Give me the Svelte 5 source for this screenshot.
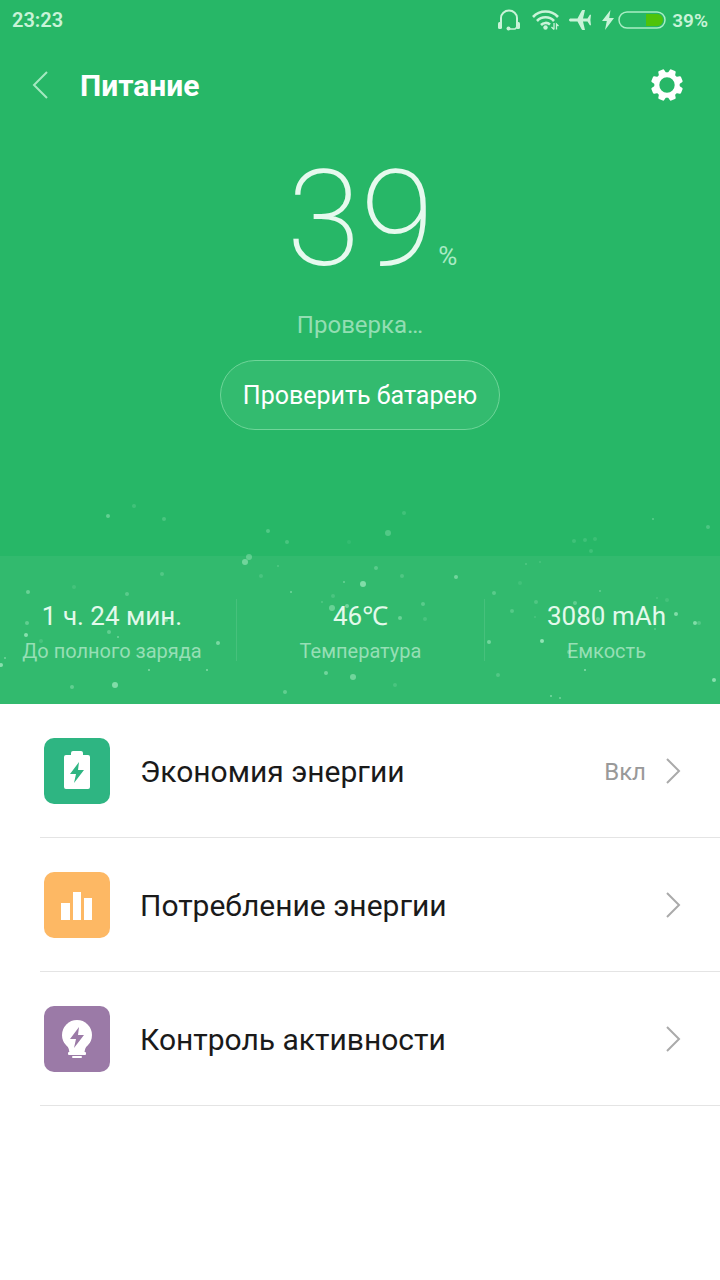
<script lang="ts">
  let level = 39;

  const stats = [
    { value: '1 ч. 24 мин.', label: 'До полного заряда' },
    { value: '46℃', label: 'Температура' },
    { value: '3080 mAh', label: 'Емкость' },
  ];

  const items = [
    { icon: 'saver', title: 'Экономия энергии', state: 'Вкл' },
    { icon: 'usage', title: 'Потребление энергии', state: '' },
    { icon: 'control', title: 'Контроль активности', state: '' },
  ];

  // x, y, radius, opacity (x is out of 720)
  const bubbles = [
    [108, 26, 2, 0.35], [134, 16, 2, 0.15], [164, 29, 2, 0.2], [162, 84, 2, 0.2],
    [74, 97, 2, 0.12], [28, 102, 2, 0.35], [127, 104, 2, 0.25], [27, 133, 2, 0.3],
    [26, 145, 2, 0.55], [109, 142, 2, 0.3], [118, 147, 1, 0.4], [41, 151, 2, 0.15],
    [218, 153, 2, 0.45], [5, 168, 1, 0.4], [1, 175, 2, 0.55], [149, 180, 1, 0.5],
    [207, 180, 1, 0.5], [72, 197, 2, 0.3], [115, 195, 3, 0.5], [166, 130, 2, 0.4],
    [268, 41, 2, 0.25], [287, 52, 2, 0.2], [249, 67, 3, 0.3], [245, 72, 3, 0.4],
    [278, 76, 1, 0.2], [261, 86, 2, 0.15], [349, 52, 2, 0.08], [388, 43, 3, 0.25],
    [404, 23, 2, 0.15], [376, 78, 2, 0.25], [402, 86, 2, 0.18], [456, 87, 2, 0.4],
    [344, 92, 1, 0.35], [363, 94, 3, 0.5], [291, 102, 1, 0.4], [333, 106, 2, 0.15],
    [322, 112, 1, 0.2], [332, 118, 3, 0.35], [347, 116, 2, 0.4], [423, 114, 2, 0.25],
    [400, 128, 2, 0.35], [425, 129, 2, 0.15], [326, 183, 2, 0.4], [353, 187, 3, 0.4],
    [395, 195, 2, 0.15], [285, 202, 2, 0.3], [653, 29, 1, 0.3], [708, 37, 2, 0.22],
    [574, 51, 2, 0.14], [585, 50, 2, 0.14], [595, 49, 2, 0.12], [591, 61, 2, 0.14],
    [526, 74, 1, 0.2], [540, 72, 1, 0.15], [520, 93, 2, 0.1], [494, 103, 2, 0.25],
    [536, 112, 2, 0.18], [512, 121, 2, 0.22], [600, 101, 1, 0.3], [575, 113, 2, 0.3],
    [535, 127, 1, 0.15], [657, 108, 1, 0.15], [667, 110, 2, 0.12], [676, 124, 2, 0.5],
    [598, 129, 2, 0.35], [695, 133, 2, 0.5], [699, 133, 2, 0.2], [655, 139, 1, 0.25],
    [542, 151, 2, 0.6], [489, 152, 2, 0.4], [569, 162, 2, 0.3], [585, 180, 1, 0.55],
    [498, 185, 2, 0.2], [714, 190, 2, 0.55], [551, 206, 1, 0.45], [560, 208, 1, 0.4],
  ];

  const teeth = [0, 1, 2, 3, 4, 5, 6, 7].map(n => n * 45 + 22.5);
</script>

<main>
  <section class="hero">
    <svg class="bubbles" aria-hidden="true">
      {#each bubbles as [x, y, r, o]}
        <circle cx="{x / 7.2}%" cy={y} {r} fill="#d0ffe2" opacity={o} />
      {/each}
    </svg>

    <div class="status">
      <span class="time">23:23</span>
      <div class="status-icons">
        <svg class="headset" width="22" height="22" viewBox="0 0 22 22">
          <path d="M3 17V9a8 7.5 0 0 1 16 0v8" fill="none" stroke="currentColor" stroke-width="2" />
          <rect x="0" y="13" width="4" height="7" rx="1.5" fill="currentColor" />
          <rect x="18" y="13" width="4" height="7" rx="1.5" fill="currentColor" />
          <path d="M19 18l-2 2h-6" fill="none" stroke="currentColor" stroke-width="1.5" />
          <circle cx="10.5" cy="19.5" r="2" fill="currentColor" />
        </svg>
        <svg class="wifi" width="28" height="22" viewBox="0 0 28 22">
          <g fill="none" stroke="currentColor" stroke-width="2.6">
            <path d="M1 8a17 17 0 0 1 25 0" />
            <path d="M5 12a11.5 11.5 0 0 1 17 0" />
            <path d="M9 16a6.5 6.5 0 0 1 9 -.5" />
          </g>
          <circle cx="13.5" cy="18.5" r="2.2" fill="currentColor" />
          <path d="M22 14v6.5M19.5 18l2.5 2.5M24.5 20.5V15l2 2" fill="none" stroke="currentColor" stroke-width="1.3" />
        </svg>
        <svg class="plane" width="24" height="22" viewBox="0 0 24 22">
          <path d="M1 11c0-.8.7-1.500 2-1.500h6.500L13.500 2c.3-.6.700-1 1.200-1H17l-2 8.500h4.500l2-3.300c.3-.5.600-.6 1.500-.5l-.6 5.300.6 5.300c-.9.100-1.200 0-1.500-.5l-2-3.300H15L17 21h-2.300c-.5 0-.9-.4-1.200-1l-4-7.500H3c-1.300 0-2-.7-2-1.500z" fill="currentColor" />
        </svg>
        <svg class="bolt" width="12" height="20" viewBox="0 0 12 20">
          <path d="M8.500 0L0 11h4.800L3 20l9-12H7.200z" fill="currentColor" />
        </svg>
        <svg class="battery" width="48" height="18" viewBox="0 0 48 18">
          <path d="M28 3h11a6 6 0 0 1 0 12H28z" fill="#4fc30a" />
          <rect x="1" y="1" width="46" height="16" rx="8" fill="none" stroke="#a9eec5" stroke-width="1.5" />
        </svg>
        <span class="percent">{level}%</span>
      </div>
    </div>

    <header>
      <button class="back" aria-label="Назад">
        <svg width="18" height="30" viewBox="0 0 18 30">
          <path d="M15 2L2 15l13 13" fill="none" stroke="currentColor" stroke-width="2" />
        </svg>
      </button>
      <h1>Питание</h1>
      <button class="settings" aria-label="Настройки">
        <svg width="34" height="34" viewBox="-17 -17 34 34">
          <circle r="10.2" fill="none" stroke="#fff" stroke-width="5" />
          {#each teeth as angle}
            <path d="M-4.200 -10L-3.200 -15Q-3 -16 -2 -16H2Q3 -16 3.200 -15L4.200 -10z" fill="#fff" transform="rotate({angle})" />
          {/each}
        </svg>
      </button>
    </header>

    <div class="level">
      <span class="number">{level}</span><span class="unit">%</span>
    </div>
    <p class="checking">Проверка…</p>
    <button class="check">Проверить батарею</button>

    <div class="stats">
      {#each stats as stat}
        <div class="stat">
          <div class="value">{stat.value}</div>
          <div class="label">{stat.label}</div>
        </div>
      {/each}
    </div>
  </section>

  <nav>
    {#each items as item}
      <a href="#{item.icon}">
        <svg class="icon {item.icon}" width="66" height="66" viewBox="0 0 66 66">
          {#if item.icon == 'saver'}
            <path d="M22 17h5v-2q0-2 2-2h8q2 0 2 2v2h5q2 0 2 2v30q0 2-2 2H22q-2 0-2-2V19q0-2 2-2z" fill="#fff" />
            <path d="M35 24L26 36h6l-2 9 10-13h-6z" fill="#2eb582" />
          {:else if item.icon == 'usage'}
            <path d="M17 31h9v17h-9zM29 20h8v28h-8zM40 26h8v22h-8z" fill="#fff" />
          {:else}
            <circle cx="33" cy="29" r="15" fill="#fff" />
            <path d="M20 36c4 4 5 6 5.500 11h15c.5-5 1.500-7 5.500-11z" fill="#fff" />
            <rect x="24" y="46" width="18" height="3" rx="1" fill="#fff" />
            <rect x="28" y="50" width="10" height="2" rx="1" fill="#fff" />
            <path d="M35 21l-9 12h6l-2 9 10-13h-6z" fill="#9b7aa7" />
          {/if}
        </svg>
        <span class="title">{item.title}</span>
        <span class="state">{item.state}</span>
        <svg class="arrow" width="18" height="28" viewBox="0 0 18 28">
          <path d="M3 2l12 12L3 26" fill="none" stroke="#aaa" stroke-width="2" />
        </svg>
      </a>
    {/each}
  </nav>
</main>

<style>
  :global(body) {
    margin: 0;
    background: #fff;
    font-family: Roboto, 'Noto Sans', sans-serif;
  }

  button {
    background: none;
    border: none;
    padding: 0;
    color: inherit;
    font-family: inherit;
    cursor: pointer;
  }

  svg {
    display: block;
    flex: none;
  }

  .hero {
    position: relative;
    display: flex;
    flex-direction: column;
    align-items: center;
    background: #27b767;
    color: #fff;
  }

  .bubbles {
    position: absolute;
    left: 0;
    bottom: 0;
    width: 100%;
    height: 214px;
    pointer-events: none;
  }

  .status {
    display: flex;
    justify-content: space-between;
    align-items: center;
    align-self: stretch;
    height: 40px;
    padding: 0 12px;
    color: #c9f3d8;
    font-size: 20px;
    font-weight: 600;
  }

  .status-icons {
    display: flex;
    align-items: center;
  }

  .wifi {
    margin-left: 12px;
  }

  .plane {
    margin-left: 8px;
  }

  .bolt {
    margin-left: 10px;
  }

  .battery {
    margin-left: 4px;
  }

  .percent {
    margin-left: 6px;
    font-size: 19px;
  }

  header {
    display: flex;
    align-items: center;
    align-self: stretch;
    height: 90px;
    padding: 0 36px 0 32px;
  }

  .back {
    width: 48px;
    color: #a4e8c0;
  }

  h1 {
    flex: 1;
    margin: 0;
    padding-top: 2px;
    font-size: 30px;
    line-height: 36px;
    font-weight: 700;
  }

  .level {
    display: flex;
    align-items: baseline;
    margin-top: 12px;
    padding-left: 24px;
  }

  .number {
    font-size: 134px;
    line-height: 156px;
    font-weight: 200;
    color: #e6f9ee;
  }

  .unit {
    margin-left: 4px;
    font-size: 26px;
    line-height: 30px;
    color: #a9ebc4;
  }

  .checking {
    margin: 12px 0 20px;
    font-size: 24px;
    line-height: 30px;
    color: #93deb3;
  }

  .check {
    height: 70px;
    padding: 0 22px;
    border: 1px solid #6fd599;
    border-radius: 35px;
    background: rgba(255, 255, 255, 0.06);
    font-size: 25px;
  }

  .stats {
    display: grid;
    grid-template-columns: 236fr 248fr 236fr;
    align-self: stretch;
    height: 148px;
    margin-top: 126px;
    background: rgba(255, 255, 255, 0.05);
    text-align: center;
    align-items: center;
  }

  .stat {
    height: 62px;
    border-left: 1px solid rgba(255, 255, 255, 0.1);
  }

  .stat:first-child {
    padding-right: 12px;
    border-left: none;
  }

  .stat:last-child {
    padding-left: 8px;
  }

  .value {
    font-size: 26px;
    line-height: 34px;
    color: #e3f9eb;
  }

  .label {
    margin-top: 6px;
    font-size: 20px;
    line-height: 24px;
    color: #96dfb5;
  }

  nav {
    padding-left: 40px;
  }

  nav a {
    display: flex;
    align-items: center;
    height: 133px;
    padding: 0 38px 0 4px;
    border-bottom: 1px solid #e4e4e4;
    color: #1a1a1a;
    text-decoration: none;
  }

  .icon {
    border-radius: 10px;
  }

  .saver {
    background: #2eb582;
  }

  .usage {
    background: #fdb864;
  }

  .control {
    background: #9b7aa7;
  }

  .title {
    flex: 1;
    margin-left: 30px;
    padding-top: 2px;
    font-size: 30px;
    line-height: 36px;
  }

  .state {
    margin-right: 18px;
    padding-top: 2px;
    font-size: 24px;
    color: #999;
  }
</style>
